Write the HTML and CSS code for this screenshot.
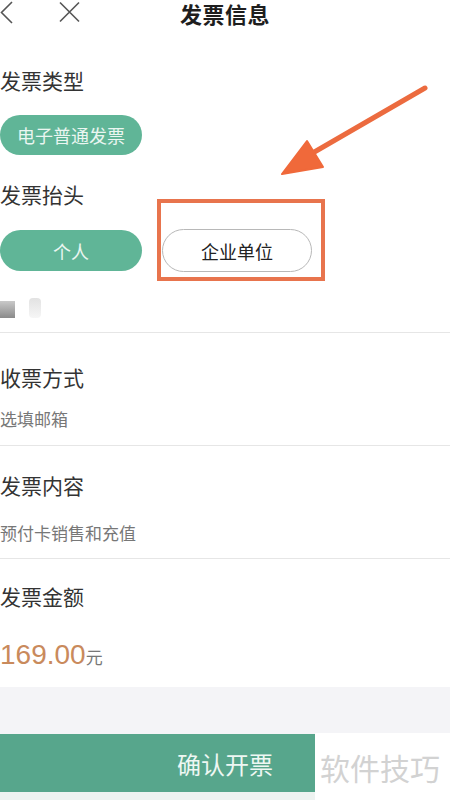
FILE: index.html
```html
<!DOCTYPE html>
<html lang="zh">
<head>
<meta charset="utf-8">
<title>发票信息</title>
<link rel="stylesheet" href="styles.css">
</head>
<body>
<div class="page">
  <header class="header">
    <div class="nav">
      <svg class="ic-back" width="14" height="26" viewBox="0 0 14 26"><polyline points="12,2 1.5,12.5 12,23" fill="none" stroke="#555" stroke-width="1.6"/></svg>
      <svg class="ic-close" width="24" height="26" viewBox="0 0 24 26"><path d="M2 2.5 L21 21.5 M21 2.5 L2 21.5" fill="none" stroke="#555" stroke-width="1.6"/></svg>
    </div>
    <div class="title">发票信息</div>
    <div></div>
  </header>

  <div class="label first">发票类型</div>
  <div class="pill pill-green pill-type">电子普通发票</div>

  <div class="label second">发票抬头</div>
  <div class="pill-row">
    <div class="pill pill-green pill-person">个人</div>
    <div class="pill pill-outline">企业单位</div>
  </div>
  <div class="smudge-row">
    <div class="smudge dark"></div>
    <div class="smudge light"></div>
  </div>
  <div class="divider d1"></div>

  <div class="label row1">收票方式</div>
  <div class="sub sub1">选填邮箱</div>
  <div class="divider d2"></div>

  <div class="label row2">发票内容</div>
  <div class="sub sub2">预付卡销售和充值</div>
  <div class="divider d3"></div>

  <div class="label row3">发票金额</div>
  <div class="amount"><span class="num">169.00</span><span class="unit">元</span></div>

  <div class="grey-area"></div>
  <div class="confirm">确认开票</div>
  <div class="bottom-strip"></div>

  <div class="highlight-box"></div>
  <svg class="arrow" width="450" height="200" viewBox="0 0 450 200">
    <line x1="425" y1="88" x2="304" y2="158" stroke="#ec6b3f" stroke-width="5" stroke-linecap="round"/>
    <polygon points="282,174 307,141 323,167" fill="#f0693a" stroke="#f0693a" stroke-width="2" stroke-linejoin="round"/>
  </svg>
  <div class="watermark">软件技巧</div>
</div>
</body>
</html>
```

FILE: styles.css
```css
html, body {
  margin: 0;
  padding: 0;
  background: #ffffff;
}
.page {
  position: relative;
  width: 450px;
  height: 801px;
  overflow: hidden;
  font-family: "Noto Sans CJK SC", "Noto Sans", sans-serif;
  color: #333;
}
.header {
  display: grid;
  grid-template-columns: 1fr auto 1fr;
  height: 26px;
  align-items: center;
}
.nav {
  display: flex;
  align-items: center;
  gap: 44px;
  height: 26px;
}
.ic-back, .ic-close { display: block; }
.title {
  font-size: 22px;
  font-weight: bold;
  line-height: 26px;
  color: #1e1e1e;
  letter-spacing: 0.5px;
}
.label {
  font-size: 21px;
  line-height: 30px;
  color: #333;
}
.label.first { margin-top: 39px; }
.label.second { margin-top: 24px; }
.label.row1 { margin-top: 29px; }
.label.row2 { margin-top: 24px; }
.label.row3 { margin-top: 22px; }

.pill {
  display: flex;
  align-items: center;
  justify-content: center;
  box-sizing: border-box;
  border-radius: 22px;
  font-size: 18px;
}
.pill-green {
  background: #60b597;
  color: #eaf6f1;
}
.pill-type {
  width: 142px;
  height: 40px;
  margin-top: 20px;
}
.pill-row {
  display: flex;
  align-items: center;
  gap: 20px;
  margin-top: 20px;
}
.pill-person {
  width: 142px;
  height: 41px;
}
.pill-outline {
  width: 150px;
  height: 43px;
  border: 1.5px solid #b8b8b8;
  color: #222;
  background: #fff;
}
.smudge-row {
  display: flex;
  gap: 14px;
  margin-top: 24px;
  height: 22px;
  align-items: flex-end;
}
.smudge { height: 17px; }
.smudge.dark {
  width: 15px;
  background: linear-gradient(#c9c9c9, #8a8a8a);
}
.smudge.light {
  width: 12px;
  height: 20px;
  background: linear-gradient(#e2e2e2, #f6f6f6);
  border-radius: 4px;
}
.divider {
  height: 1px;
  background: #e6e6e6;
}
.d1 { margin-top: 14px; }
.d2 { margin-top: 14px; }
.d3 { margin-top: 13px; }
.sub {
  font-size: 17px;
  line-height: 24px;
  color: #777;
}
.sub1 { margin-top: 15px; }
.sub2 { margin-top: 21px; }
.amount {
  margin-top: 26px;
  line-height: 36px;
  height: 36px;
  display: flex;
  align-items: baseline;
}
.num {
  font-family: "Liberation Sans", Arial, sans-serif;
  font-size: 28px;
  color: #c98a5c;
}
.unit {
  font-size: 17px;
  color: #777;
}
.grey-area {
  margin-top: 14px;
  height: 47px;
  background: #f4f4f7;
}
.confirm {
  height: 58px;
  background: #57a68c;
  color: #eef7f3;
  font-size: 24px;
  display: flex;
  align-items: center;
  justify-content: center;
}
.bottom-strip {
  height: 8px;
  background: #eef3f1;
}
.highlight-box {
  position: absolute;
  left: 157px;
  top: 199px;
  width: 168px;
  height: 82px;
  box-sizing: border-box;
  border: 4px solid #e8744d;
}
.arrow {
  position: absolute;
  left: 0;
  top: 0;
}
.watermark {
  position: absolute;
  left: 315px;
  top: 733px;
  right: 0;
  bottom: 0;
  background: #ffffff;
  color: #d2d2d2;
  font-size: 30px;
  line-height: 68px;
  padding-left: 5px;
  white-space: nowrap;
}
```
